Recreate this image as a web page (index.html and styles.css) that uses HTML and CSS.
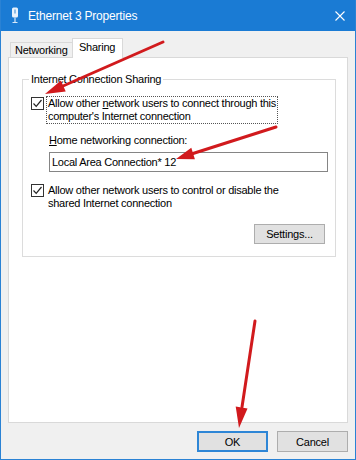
FILE: index.html
```html
<!DOCTYPE html>
<html>
<head>
<meta charset="utf-8">
<link rel="stylesheet" href="styles.css">
</head>
<body>
<div class="window">
  <div class="titlebar">
    <svg class="appicon" width="8" height="17" viewBox="0 0 8 17">
      <rect x="1" y="0.5" width="6" height="10" rx="1.5" fill="#e8f2fc"/>
      <rect x="3" y="2.5" width="2" height="4" fill="#8dbce6"/>
      <line x1="4" y1="10.5" x2="4" y2="15" stroke="#d6e8f8" stroke-width="1.2"/>
      <line x1="1.5" y1="15.5" x2="6.5" y2="15.5" stroke="#d6e8f8" stroke-width="1"/>
    </svg>
    <span class="title">Ethernet 3 Properties</span>
    <svg class="close" width="10" height="10" viewBox="0 0 10 10">
      <path d="M0.5 0.5 L9.5 9.5 M9.5 0.5 L0.5 9.5" stroke="#ffffff" stroke-width="1.1" fill="none"/>
    </svg>
  </div>
  <div class="tabs">
    <div class="tab">Networking</div>
    <div class="tab active">Sharing</div>
  </div>
  <div class="panel">
    <fieldset class="group">
      <legend>Internet Connection Sharing</legend>
      <div class="check-row first">
        <span class="cb"><svg width="11" height="11" viewBox="0 0 11 11"><path d="M1.5 5.5 L4.2 8.3 L9.5 2" stroke="#222" stroke-width="1.2" fill="none"/></svg></span>
        <span class="cb-label focus">Allow other <u>n</u>etwork users to connect through this<br>computer's Internet connection</span>
      </div>
      <div class="home">
        <div class="home-label"><u>H</u>ome networking connection:</div>
        <div class="textbox">Local Area Connection* 12</div>
      </div>
      <div class="check-row second">
        <span class="cb"><svg width="11" height="11" viewBox="0 0 11 11"><path d="M1.5 5.5 L4.2 8.3 L9.5 2" stroke="#222" stroke-width="1.2" fill="none"/></svg></span>
        <span class="cb-label">Allow other network users to control or disable the<br>shared Internet connection</span>
      </div>
      <div class="settings-row">
        <button class="btn settings">Settings...</button>
      </div>
    </fieldset>
  </div>
  <div class="footer">
    <button class="btn ok">OK</button>
    <button class="btn">Cancel</button>
  </div>
  <svg class="arrows" width="356" height="460" viewBox="0 0 356 460">
    <g stroke="#d11a1d" stroke-width="3" stroke-linecap="round" fill="none">
      <line x1="163" y1="42" x2="63" y2="86"/>
      <line x1="276" y1="127" x2="193" y2="153.5"/>
      <line x1="255" y1="321" x2="242" y2="407"/>
    </g>
    <g fill="#d11a1d">
      <polygon points="45,94 60.9,80.4 65.7,91.4"/>
      <polygon points="176,159 191.3,147.8 194.9,159.2"/>
      <polygon points="239,428 235.7,406.5 247.5,408.5"/>
    </g>
  </svg>
</div>
</body>
</html>
```

FILE: styles.css
```css
html, body {
  margin: 0;
  padding: 0;
  background: #ffffff;
}

body {
  font-family: "Liberation Sans", Arial, sans-serif;
  font-size: 11px;
  letter-spacing: -0.25px;
  color: #000000;
}

.window {
  position: relative;
  width: 356px;
  height: 460px;
  box-sizing: border-box;
  border: 1px solid #2a82d4;
  border-top: none;
  background: #f0f0f0;
  display: flex;
  flex-direction: column;
  overflow: hidden;
}

.titlebar {
  height: 31px;
  flex: none;
  background: #1a7bd4;
  display: flex;
  align-items: center;
  padding: 0 11px 0 11px;
  margin: 0 -1px;
}

.appicon {
  flex: none;
  margin-top: 0;
}

.title {
  margin-left: 9px;
  color: #ffffff;
  font-size: 12px;
  letter-spacing: -0.2px;
}

.close {
  margin-left: auto;
  flex: none;
}

.tabs {
  position: relative;
  z-index: 1;
  display: flex;
  align-items: flex-end;
  height: 20px;
  margin: 7px 0 0 9px;
  flex: none;
}

.tab {
  box-sizing: border-box;
  height: 15px;
  margin-bottom: 1px;
  line-height: 13px;
  padding: 1px 0 0 4px;
  width: 62px;
  border: 1px solid #d9d9d9;
  border-right: none;
  border-bottom: none;
  background: #f0f0f0;
}

.tab.active {
  height: 20px;
  width: 51px;
  margin-bottom: 0;
  padding: 2px 0 0 6px;
  border-right: 1px solid #d9d9d9;
  background: #ffffff;
}

.panel {
  position: relative;
  z-index: 0;
  flex: 1;
  margin: -1px 7px 0 7px;
  background: #ffffff;
  border: 1px solid #d9d9d9;
  display: flex;
  flex-direction: column;
}

.group {
  margin: 15px 11px 0 13px;
  padding: 0 0 12px 0;
  border: 1px solid #dcdcdc;
  min-width: 0;
}

.group legend {
  margin-left: 6px;
  padding: 0 2px;
  line-height: 13px;
}

.check-row {
  display: flex;
  align-items: flex-start;
  margin-left: 8px;
}

.check-row.first {
  margin-top: 10px;
}

.check-row.second {
  margin-top: 11px;
}

.cb {
  flex: none;
  box-sizing: border-box;
  width: 13px;
  height: 13px;
  margin-top: 1px;
  border: 1px solid #333333;
  background: #ffffff;
  display: flex;
  align-items: center;
  justify-content: center;
}

.cb-label {
  margin-left: 2px;
  padding: 0 1px;
  line-height: 13px;
  border: 1px dotted transparent;
}

.cb-label.focus {
  border-color: #555555;
}

.home {
  margin: 10px 7px 0 26px;
}

.home-label {
  line-height: 13px;
}

.textbox {
  box-sizing: border-box;
  margin-top: 5px;
  height: 20px;
  line-height: 18px;
  padding-left: 2px;
  border: 1px solid #858585;
  background: #ffffff;
}

.settings-row {
  display: flex;
  justify-content: flex-end;
  margin: 13px 10px 0 0;
}

.btn {
  box-sizing: border-box;
  width: 71px;
  height: 21px;
  padding: 0;
  font-family: "Liberation Sans", Arial, sans-serif;
  font-size: 11px;
  letter-spacing: -0.2px;
  color: #000000;
  background: #e1e1e1;
  border: 1px solid #adadad;
  text-align: center;
}

.btn.settings {
  height: 20px;
}

.btn.ok {
  border: 2px solid #2e86d6;
}

.footer {
  flex: none;
  display: flex;
  justify-content: flex-end;
  gap: 9px;
  padding: 8px 7px 7px 0;
}

.arrows {
  position: absolute;
  left: -1px;
  top: 0;
  pointer-events: none;
}
```
